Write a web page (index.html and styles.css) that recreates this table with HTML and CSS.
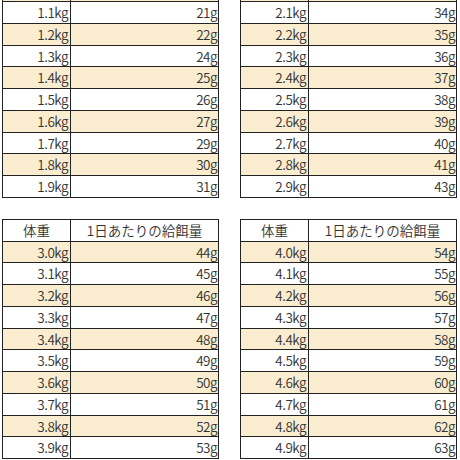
FILE: index.html
```html
<!DOCTYPE html>
<html lang="ja">
<head>
<meta charset="utf-8">
<link rel="stylesheet" href="styles.css">
</head>
<body>
<div class="page">
  <div class="tbl top">
    <div class="row alt"><div class="c1"></div><div class="c2"></div></div>
    <div class="row"><div class="c1">1.1kg</div><div class="c2">21g</div></div>
    <div class="row alt"><div class="c1">1.2kg</div><div class="c2">22g</div></div>
    <div class="row"><div class="c1">1.3kg</div><div class="c2">24g</div></div>
    <div class="row alt"><div class="c1">1.4kg</div><div class="c2">25g</div></div>
    <div class="row"><div class="c1">1.5kg</div><div class="c2">26g</div></div>
    <div class="row alt"><div class="c1">1.6kg</div><div class="c2">27g</div></div>
    <div class="row"><div class="c1">1.7kg</div><div class="c2">29g</div></div>
    <div class="row alt"><div class="c1">1.8kg</div><div class="c2">30g</div></div>
    <div class="row"><div class="c1">1.9kg</div><div class="c2">31g</div></div>
  </div>
  <div class="tbl top">
    <div class="row alt"><div class="c1"></div><div class="c2"></div></div>
    <div class="row"><div class="c1">2.1kg</div><div class="c2">34g</div></div>
    <div class="row alt"><div class="c1">2.2kg</div><div class="c2">35g</div></div>
    <div class="row"><div class="c1">2.3kg</div><div class="c2">36g</div></div>
    <div class="row alt"><div class="c1">2.4kg</div><div class="c2">37g</div></div>
    <div class="row"><div class="c1">2.5kg</div><div class="c2">38g</div></div>
    <div class="row alt"><div class="c1">2.6kg</div><div class="c2">39g</div></div>
    <div class="row"><div class="c1">2.7kg</div><div class="c2">40g</div></div>
    <div class="row alt"><div class="c1">2.8kg</div><div class="c2">41g</div></div>
    <div class="row"><div class="c1">2.9kg</div><div class="c2">43g</div></div>
  </div>
  <div class="tbl">
    <div class="row head"><div class="c1">体重</div><div class="c2">1日あたりの給餌量</div></div>
    <div class="row alt"><div class="c1">3.0kg</div><div class="c2">44g</div></div>
    <div class="row"><div class="c1">3.1kg</div><div class="c2">45g</div></div>
    <div class="row alt"><div class="c1">3.2kg</div><div class="c2">46g</div></div>
    <div class="row"><div class="c1">3.3kg</div><div class="c2">47g</div></div>
    <div class="row alt"><div class="c1">3.4kg</div><div class="c2">48g</div></div>
    <div class="row"><div class="c1">3.5kg</div><div class="c2">49g</div></div>
    <div class="row alt"><div class="c1">3.6kg</div><div class="c2">50g</div></div>
    <div class="row"><div class="c1">3.7kg</div><div class="c2">51g</div></div>
    <div class="row alt"><div class="c1">3.8kg</div><div class="c2">52g</div></div>
    <div class="row"><div class="c1">3.9kg</div><div class="c2">53g</div></div>
  </div>
  <div class="tbl">
    <div class="row head"><div class="c1">体重</div><div class="c2">1日あたりの給餌量</div></div>
    <div class="row alt"><div class="c1">4.0kg</div><div class="c2">54g</div></div>
    <div class="row"><div class="c1">4.1kg</div><div class="c2">55g</div></div>
    <div class="row alt"><div class="c1">4.2kg</div><div class="c2">56g</div></div>
    <div class="row"><div class="c1">4.3kg</div><div class="c2">57g</div></div>
    <div class="row alt"><div class="c1">4.4kg</div><div class="c2">58g</div></div>
    <div class="row"><div class="c1">4.5kg</div><div class="c2">59g</div></div>
    <div class="row alt"><div class="c1">4.6kg</div><div class="c2">60g</div></div>
    <div class="row"><div class="c1">4.7kg</div><div class="c2">61g</div></div>
    <div class="row alt"><div class="c1">4.8kg</div><div class="c2">62g</div></div>
    <div class="row"><div class="c1">4.9kg</div><div class="c2">63g</div></div>
  </div>
</div>
</body>
</html>
```
FILE: styles.css
```css
html, body {
  margin: 0;
  padding: 0;
  background: #ffffff;
}
body {
  width: 460px;
  height: 460px;
  overflow: hidden;
  font-family: "Noto Sans CJK JP", "Noto Sans", sans-serif;
  font-size: 13.5px;
  font-weight: 350;
  color: #333;
}
.page {
  display: grid;
  grid-template-columns: 217px 217px;
  column-gap: 21px;
  row-gap: 21px;
  padding-left: 2px;
  margin-top: -20.75px;
  align-items: start;
}
.tbl {
  border: 1px solid #222;
  border-top: none;
  box-sizing: border-box;
}
.row {
  display: grid;
  grid-template-columns: 68px 1fr;
  height: 21.75px;
  border-top: 1px solid #222;
  box-sizing: border-box;
  background: #fff;
}
.row.alt {
  background: #faedcf;
}
.c1, .c2 {
  display: flex;
  align-items: center;
  justify-content: flex-end;
  line-height: 1;
  padding-top: 1px;
  letter-spacing: -0.5px;
}
.c1 {
  border-right: 1px solid #222;
  padding-right: 2px;
}
.c2 {
  padding-right: 1px;
}
.head .c1, .head .c2 {
  justify-content: center;
  padding-right: 0;
  letter-spacing: 0;
}
```
